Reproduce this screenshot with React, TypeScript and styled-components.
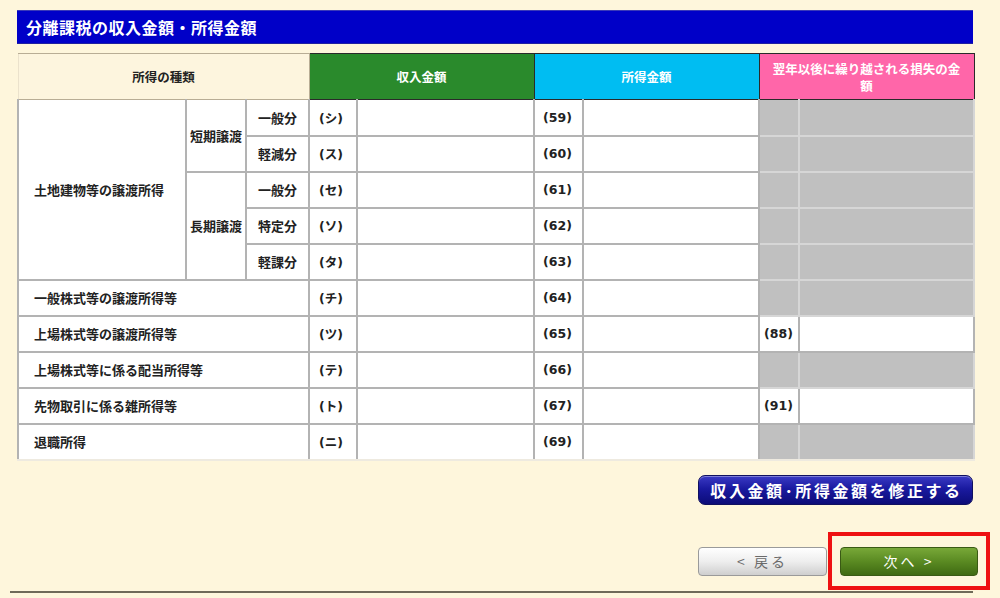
import React from "react";
import styled, { createGlobalStyle } from "styled-components";

const GlobalStyle = createGlobalStyle`
  html, body {
    margin: 0;
    padding: 0;
    background: #fef6dc;
  }
  body {
    font-family: "DejaVu Sans", "Noto Sans CJK JP", sans-serif;
  }
`;

const Page = styled.div`
  width: 956px;
  padding: 10px 0 0 17px;
  display: flex;
  flex-direction: column;
`;

const TitleBar = styled.div`
  height: 34px;
  box-sizing: border-box;
  background: #0000c8;
  border-top: 1px solid #3a3ab8;
  border-bottom: 1px solid #2020a0;
  color: #fff;
  font-family: "Noto Sans CJK JP", sans-serif;
  font-weight: 700;
  font-size: 16px;
  display: flex;
  align-items: center;
  padding-left: 9px;
  letter-spacing: 0.5px;
`;

const Table = styled.table`
  margin-top: 9px;
  width: 956px;
  table-layout: fixed;
  border-collapse: collapse;
  font-size: 13px;
  font-weight: 700;
  color: #222;

  tbody tr:last-child td {
    border-bottom-color: #eeeae0;
  }
`;

type Tone = "cream" | "green" | "cyan" | "pink";

const headBg: Record<Tone, string> = {
  cream: "#fdf5de",
  green: "#2a8a2c",
  cyan: "#00bdf2",
  pink: "#ff66a9",
};

const HeadCell = styled.th<{ $tone: Tone }>`
  height: 46px;
  box-sizing: border-box;
  padding: 0 8px;
  background: ${(p) => headBg[p.$tone]};
  color: ${(p) => (p.$tone === "cream" ? "#222" : "#fff")};
  border: 1px solid ${(p) => (p.$tone === "cream" ? "#b8ad95" : "#2a2a2a")};
  border-left: ${(p) => (p.$tone === "cream" ? "1px solid #ebe2cc" : "1px solid #2a2a2a")};
  font-family: "Noto Sans CJK JP", sans-serif;
  font-weight: 700;
  font-size: 12.5px;
  line-height: 17px;
  text-align: center;
  vertical-align: middle;
`;

const Cell = styled.td<{ $align?: "left" | "center"; $gray?: boolean; $pad?: number }>`
  height: 36px;
  box-sizing: border-box;
  padding: 0 0 0 ${(p) => (p.$pad ?? 0)}px;
  background: ${(p) => (p.$gray ? "#c0c0c0" : "#fff")};
  border: 2px solid ${(p) => (p.$gray ? "#d6d6d6" : "#b3b3b3")};
  border-top: none;
  text-align: ${(p) => p.$align ?? "left"};
  vertical-align: middle;
  font-family: "Noto Sans CJK JP", sans-serif;
  white-space: nowrap;
`;

const Code = styled(Cell)`
  font-family: "DejaVu Sans", "Noto Sans CJK JP", sans-serif;
  font-size: 12.5px;
`;

const Actions = styled.div`
  display: flex;
  justify-content: flex-end;
  margin-top: 14px;
`;

const FixButton = styled.button`
  width: 275px;
  height: 30px;
  border-radius: 7px;
  border: 1px solid #101060;
  background: linear-gradient(#3a3ac4, #1a1aa0 45%, #0c0c78);
  color: #fff;
  font-family: "Noto Sans CJK JP", sans-serif;
  font-weight: 700;
  font-size: 16px;
  letter-spacing: 2.6px;
  padding: 0 0 0 2px;
  box-shadow: inset 0 1px 0 rgba(255, 255, 255, 0.35);
`;

const NavRow = styled.div`
  display: flex;
  justify-content: flex-end;
  align-items: flex-start;
  margin-top: 27px;
  margin-right: -17px;
  gap: 1px;
`;

const BackButton = styled.button`
  margin-top: 15px;
  width: 129px;
  height: 29px;
  border-radius: 4px;
  border: 1px solid #9a9a9a;
  background: linear-gradient(#ffffff, #eeeeee 50%, #cfcfcf);
  color: #6a6a6a;
  font-family: "Noto Sans CJK JP", sans-serif;
  font-size: 14px;
  letter-spacing: 3px;
  padding: 0;
`;

const Highlight = styled.div`
  border: 4px solid #ee1111;
  padding: 11px 8px 10px 8px;
`;

const NextButton = styled.button`
  display: block;
  width: 138px;
  height: 29px;
  border-radius: 4px;
  border: 1px solid #3a5a14;
  background: linear-gradient(#78a838, #5a8a22 50%, #3f6a12);
  color: #fff;
  font-family: "Noto Sans CJK JP", sans-serif;
  font-size: 14px;
  letter-spacing: 3px;
  padding: 0;
`;

const BottomRule = styled.div`
  margin-left: -7px;
  width: 963px;
  height: 2px;
  background: #6f6a58;
  margin-top: 1px;
`;

type Row = { code: string; num: string; loss?: string; gray: boolean };

const landRows: { group?: string; sub: string; row: Row }[] = [
  { group: "短期譲渡", sub: "一般分", row: { code: "(シ)", num: "(59)", gray: true } },
  { sub: "軽減分", row: { code: "(ス)", num: "(60)", gray: true } },
  { group: "長期譲渡", sub: "一般分", row: { code: "(セ)", num: "(61)", gray: true } },
  { sub: "特定分", row: { code: "(ソ)", num: "(62)", gray: true } },
  { sub: "軽課分", row: { code: "(タ)", num: "(63)", gray: true } },
];

const otherRows: { label: string; row: Row }[] = [
  { label: "一般株式等の譲渡所得等", row: { code: "(チ)", num: "(64)", gray: true } },
  { label: "上場株式等の譲渡所得等", row: { code: "(ツ)", num: "(65)", loss: "(88)", gray: false } },
  { label: "上場株式等に係る配当所得等", row: { code: "(テ)", num: "(66)", gray: true } },
  { label: "先物取引に係る雑所得等", row: { code: "(ト)", num: "(67)", loss: "(91)", gray: false } },
  { label: "退職所得", row: { code: "(ニ)", num: "(69)", gray: true } },
];

function AmountCells({ row }: { row: Row }) {
  return (
    <>
      <Code $pad={9}>{row.code}</Code>
      <Cell />
      <Code $pad={8}>{row.num}</Code>
      <Cell />
      <Code $pad={4} $gray={row.gray}>{row.loss}</Code>
      <Cell $gray={row.gray} />
    </>
  );
}

export default function App() {
  return (
    <>
      <GlobalStyle />
      <Page>
        <TitleBar>分離課税の収入金額・所得金額</TitleBar>
        <Table>
          <colgroup>
            <col style={{ width: 168 }} />
            <col style={{ width: 60 }} />
            <col style={{ width: 63 }} />
            <col style={{ width: 48 }} />
            <col style={{ width: 177 }} />
            <col style={{ width: 49 }} />
            <col style={{ width: 176 }} />
            <col style={{ width: 40 }} />
            <col style={{ width: 175 }} />
          </colgroup>
          <thead>
            <tr>
              <HeadCell $tone="cream" colSpan={3}>所得の種類</HeadCell>
              <HeadCell $tone="green" colSpan={2}>収入金額</HeadCell>
              <HeadCell $tone="cyan" colSpan={2}>所得金額</HeadCell>
              <HeadCell $tone="pink" colSpan={2}>翌年以後に繰り越される損失の金額</HeadCell>
            </tr>
          </thead>
          <tbody>
            {landRows.map((r, i) => (
              <tr key={r.row.code}>
                {i === 0 && (
                  <Cell rowSpan={5} $pad={15}>土地建物等の譲渡所得</Cell>
                )}
                {r.group && (
                  <Cell rowSpan={i === 0 ? 2 : 3} $align="center">{r.group}</Cell>
                )}
                <Cell $align="center">{r.sub}</Cell>
                <AmountCells row={r.row} />
              </tr>
            ))}
            {otherRows.map((r) => (
              <tr key={r.row.code}>
                <Cell colSpan={3} $pad={15}>{r.label}</Cell>
                <AmountCells row={r.row} />
              </tr>
            ))}
          </tbody>
        </Table>
        <Actions>
          <FixButton>収入金額･所得金額を修正する</FixButton>
        </Actions>
        <NavRow>
          <BackButton>&lt; 戻る</BackButton>
          <Highlight>
            <NextButton>次へ &gt;</NextButton>
          </Highlight>
        </NavRow>
        <BottomRule />
      </Page>
    </>
  );
}
